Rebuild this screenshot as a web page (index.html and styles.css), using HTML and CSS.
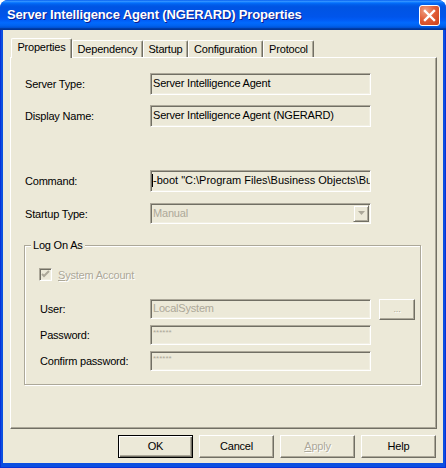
FILE: index.html
```html
<!DOCTYPE html>
<html>
<head>
<meta charset="utf-8">
<link rel="stylesheet" href="styles.css">
</head>
<body>
<div class="window">
  <div class="titlebar">
    <span class="title">Server Intelligence Agent (NGERARD) Properties</span>
    <div class="close">
      <svg width="19" height="19" viewBox="0 0 19 19"><path d="M5 5 L14 14 M14 5 L5 14" stroke="#fff" stroke-width="2.4" stroke-linecap="square"/></svg>
    </div>
  </div>
  <div class="frame">
    <div class="client">
      <div class="tabs">
        <div class="tab active w-prop">Properties</div>
        <div class="tab w-dep">Dependency</div>
        <div class="tab w-start">Startup</div>
        <div class="tab w-conf">Configuration</div>
        <div class="tab w-prot">Protocol</div>
      </div>
      <div class="panel">
        <div class="row first">
          <span class="label">Server Type:</span>
          <div class="edit">Server Intelligence Agent</div>
        </div>
        <div class="row r-gap10">
          <span class="label">Display Name:</span>
          <div class="edit">Server Intelligence Agent (NGERARD)</div>
        </div>
        <div class="row r-gap43">
          <span class="label">Command:</span>
          <div class="edit cmd"><span class="caret"></span>-boot "C:\Program Files\Business Objects\Bu</div>
        </div>
        <div class="row r-gap11">
          <span class="label">Startup Type:</span>
          <div class="combo">
            <span class="combo-text">Manual</span>
            <span class="drop">
              <svg width="7" height="5" viewBox="0 0 7 5"><path d="M0 0 H7 L3.5 4 Z" fill="#ACA899"/></svg>
            </span>
          </div>
        </div>
        <div class="group">
          <div class="group-title">Log On As</div>
          <div class="check-row">
            <span class="checkbox">
              <svg width="13" height="13" viewBox="0 0 13 13"><path d="M3 6 L5 8 L10 3" fill="none" stroke="#ACA899" stroke-width="2"/></svg>
            </span>
            <span class="dis-label"><u>S</u>ystem Account</span>
          </div>
          <div class="row g-user">
            <span class="label glabel">User:</span>
            <div class="edit small dis">LocalSystem</div>
            <div class="browse">...</div>
          </div>
          <div class="row g-pw">
            <span class="label glabel">Password:</span>
            <div class="edit small pw">******</div>
          </div>
          <div class="row g-conf">
            <span class="label glabel">Confirm password:</span>
            <div class="edit small pw">******</div>
          </div>
        </div>
      </div>
      <div class="buttons">
        <div class="btn default">OK</div>
        <div class="btn">Cancel</div>
        <div class="btn disabled"><span><u>A</u>pply</span></div>
        <div class="btn">Help</div>
      </div>
    </div>
  </div>
</div>
</body>
</html>
```
FILE: styles.css
```css
html, body {
  margin: 0;
  padding: 0;
  background: #ffffff;
}
body {
  font-family: "Liberation Sans", Arial, sans-serif;
  font-size: 11px;
  letter-spacing: -0.2px;
  color: #000;
}
.window {
  width: 446px;
  height: 468px;
  display: flex;
  flex-direction: column;
  border-radius: 8px 8px 0 0;
  overflow: hidden;
  background: #0b4fe0;
}
.titlebar {
  height: 30px;
  flex: none;
  display: flex;
  align-items: center;
  padding: 0 6px 0 7px;
  background: linear-gradient(to bottom, #0058ee 0%, #3593ff 4%, #288eff 6%, #127dff 8%, #036ffc 10%, #0262ee 14%, #0057e5 20%, #0054e3 24%, #0055eb 56%, #005bf5 66%, #026afe 76%, #0062ef 86%, #0052d6 92%, #0040ab 94%, #003092 100%);
}
.title {
  flex: 1;
  color: #fff;
  font-weight: bold;
  font-size: 13px;
  letter-spacing: -0.15px;
  text-shadow: 1px 1px 0 #0f1c8c;
  white-space: nowrap;
  padding-bottom: 1px;
}
.close {
  width: 21px;
  height: 21px;
  box-sizing: border-box;
  border: 1px solid #fff;
  border-radius: 3px;
  background: radial-gradient(circle at 30% 25%, #f0a184 0%, #e2603a 45%, #cc3f16 100%);
  display: flex;
  align-items: center;
  justify-content: center;
}
.close svg { display: block; }
.frame {
  flex: 1;
  display: flex;
  padding: 0 3px 5px 3px;
  background: #0b4fe0;
  box-shadow: inset 1px 0 #0831d9, inset -1px 0 #0831d9, inset 0 -1px #0831d9;
}
.client {
  flex: 1;
  background: #ece9d8;
  padding: 8px 6px 5px 7px;
  display: flex;
  flex-direction: column;
}
.tabs {
  display: flex;
  align-items: flex-end;
  margin-left: 1px;
  height: 19px;
}
.tab {
  box-sizing: border-box;
  height: 17px;
  border-top: 1px solid #fff;
  border-left: 1px solid #fff;
  border-right: 1px solid #716f64;
  border-radius: 2px 2px 0 0;
  box-shadow: inset -1px 0 #aca899;
  text-align: center;
  line-height: 14px;
  padding-top: 1px;
  white-space: nowrap;
}
.tab.active {
  height: 20px;
  margin-bottom: -1px;
  position: relative;
  z-index: 1;
  background: #ece9d8;
}
.w-prop { width: 61px; }
.w-dep { width: 71px; }
.w-start { width: 45px; }
.w-conf { width: 75px; }
.w-prot { width: 51px; }
.panel {
  box-sizing: border-box;
  width: 427px;
  height: 372px;
  border: 1px solid;
  border-color: #fff #716f64 #716f64 #fff;
  box-shadow: inset -1px -1px #aca899;
  padding: 15px 0 0 13px;
  display: flex;
  flex-direction: column;
}
.row {
  display: flex;
  align-items: center;
  padding-left: 1px;
}
.label {
  width: 125px;
  flex: none;
  white-space: nowrap;
}
.glabel { width: 110px; }
.r-gap10 { margin-top: 10px; }
.r-gap43 { margin-top: 43px; }
.r-gap11 { margin-top: 11px; }
.edit {
  box-sizing: border-box;
  width: 221px;
  height: 22px;
  flex: none;
  border: 1px solid;
  border-color: #aca899 #fff #fff #aca899;
  box-shadow: inset 1px 1px #716f64, inset -1px -1px #f1efe2;
  background: #ece9d8;
  padding: 0 2px;
  line-height: 19px;
  white-space: nowrap;
  overflow: hidden;
}
.edit.cmd {
  padding-left: 1px;
  letter-spacing: 0;
}
.edit.small {
  height: 20px;
  line-height: 17px;
}
.edit.dis { color: #aca899; }
.edit.pw {
  color: #aca899;
  font-size: 8px;
  line-height: 11px;
  padding-top: 1px;
  letter-spacing: 0;
}
.caret {
  display: inline-block;
  width: 1px;
  height: 13px;
  background: #000;
  vertical-align: -3px;
  margin-right: 0;
}
.combo {
  box-sizing: border-box;
  width: 221px;
  height: 21px;
  flex: none;
  display: flex;
  align-items: stretch;
  border: 1px solid;
  border-color: #aca899 #fff #fff #aca899;
  box-shadow: inset 1px 1px #716f64, inset -1px -1px #f1efe2;
  background: #ece9d8;
  padding: 1px;
}
.combo-text {
  flex: 1;
  color: #aca899;
  padding-left: 1px;
  line-height: 16px;
}
.drop {
  width: 16px;
  box-sizing: border-box;
  border: 1px solid;
  border-color: #ece9d8 #716f64 #716f64 #ece9d8;
  box-shadow: inset 1px 1px #fff, inset -1px -1px #aca899;
  display: flex;
  align-items: center;
  justify-content: center;
}
.drop svg { display: block; }
.group {
  margin-top: 21px;
  width: 397px;
  box-sizing: border-box;
  border: 1px solid #aca899;
  box-shadow: inset 1px 1px #fff, 1px 1px #fff;
  padding: 0 0 13px 14px;
  display: flex;
  flex-direction: column;
}
.group-title {
  align-self: flex-start;
  margin: -8px 0 0 -8px;
  padding: 0 2px;
  line-height: 14px;
  background: #ece9d8;
}
.check-row {
  margin-top: 16px;
  height: 13px;
  display: flex;
  align-items: center;
}
.checkbox {
  width: 13px;
  height: 13px;
  box-sizing: border-box;
  border: 1px solid;
  border-color: #aca899 #fff #fff #aca899;
  box-shadow: inset 1px 1px #716f64, inset -1px -1px #f1efe2;
  background: #ece9d8;
  display: flex;
  align-items: center;
  justify-content: center;
  margin-right: 6px;
}
.checkbox svg { display: block; flex: none; }
.dis-label {
  color: #aca899;
  text-shadow: 1px 1px 0 #fff;
}
.g-user {
  margin-top: 18px;
  align-items: flex-start;
}
.g-user .label { line-height: 20px; }
.g-pw { margin-top: 5px; }
.g-conf { margin-top: 6px; }
.browse {
  box-sizing: border-box;
  width: 36px;
  height: 21px;
  margin-left: 8px;
  border: 1px solid;
  border-color: #fff #716f64 #716f64 #fff;
  box-shadow: inset -1px -1px #aca899;
  color: #aca899;
  text-shadow: 1px 1px 0 #fff;
  text-align: center;
  line-height: 18px;
  font-size: 9px;
}
.buttons {
  margin-top: 6px;
  display: flex;
  justify-content: flex-end;
  gap: 6px;
  padding-right: 1px;
}
.btn {
  box-sizing: border-box;
  width: 75px;
  height: 23px;
  border: 1px solid;
  border-color: #fff #716f64 #716f64 #fff;
  box-shadow: inset -1px -1px #aca899;
  display: flex;
  align-items: center;
  justify-content: center;
  padding-bottom: 1px;
}
.btn.default {
  border: 1px solid #000;
  box-shadow: inset 1px 1px #fff, inset -1px -1px #716f64, inset -2px -2px #aca899;
}
.btn.disabled {
  color: #aca899;
  text-shadow: 1px 1px 0 #fff;
}
```
